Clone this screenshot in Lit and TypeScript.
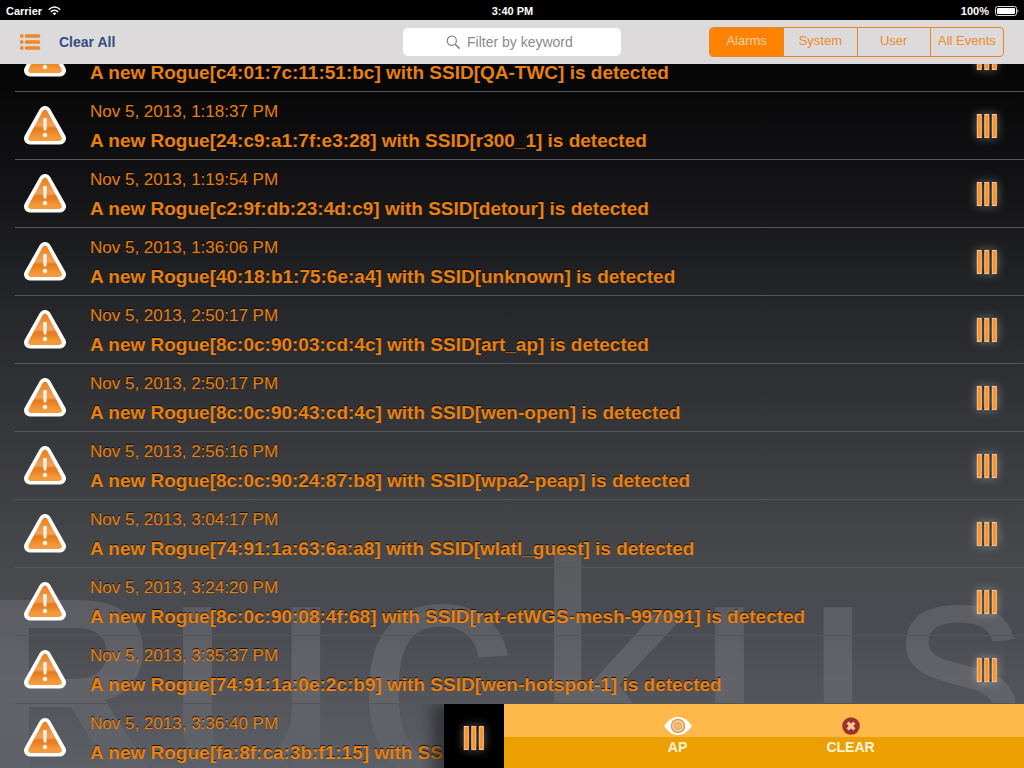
import { LitElement, html, svg, css } from "lit";
import { customElement, property, state, query } from "lit/decorators.js";
import { classMap } from "lit/directives/class-map.js";

interface Alarm {
  time: string;
  mac: string;
  ssid: string;
}

const ALARMS: Alarm[] = [
  { time: "1:17:20 PM", mac: "c4:01:7c:11:51:bc", ssid: "QA-TWC" },
  { time: "1:18:37 PM", mac: "24:c9:a1:7f:e3:28", ssid: "r300_1" },
  { time: "1:19:54 PM", mac: "c2:9f:db:23:4d:c9", ssid: "detour" },
  { time: "1:36:06 PM", mac: "40:18:b1:75:6e:a4", ssid: "unknown" },
  { time: "2:50:17 PM", mac: "8c:0c:90:03:cd:4c", ssid: "art_ap" },
  { time: "2:50:17 PM", mac: "8c:0c:90:43:cd:4c", ssid: "wen-open" },
  { time: "2:56:16 PM", mac: "8c:0c:90:24:87:b8", ssid: "wpa2-peap" },
  { time: "3:04:17 PM", mac: "74:91:1a:63:6a:a8", ssid: "wlatl_guest" },
  { time: "3:24:20 PM", mac: "8c:0c:90:08:4f:68", ssid: "rat-etWGS-mesh-997091" },
  { time: "3:35:37 PM", mac: "74:91:1a:0e:2c:b9", ssid: "wen-hotspot-1" },
  { time: "3:36:40 PM", mac: "fa:8f:ca:3b:f1:15", ssid: "HP-Print" },
];

const SEGMENTS = ["Alarms", "System", "User", "All Events"];

@customElement("grip-icon")
class GripIcon extends LitElement {
  static styles = css`
    :host { display: block; line-height: 0; }
    .grip { overflow: visible; filter: drop-shadow(0 0 5px rgba(255, 255, 255, 0.4)); }
  `;
  render() {
    return html`<svg class="grip" width="22" height="24" viewBox="0 0 22 24" aria-hidden="true">
      <rect x="1" y="0" width="20" height="24" fill="#000" fill-opacity="0.4" />
      ${[1, 8.5, 16].map(
        (x) => svg`<rect x=${x + 0.3} y="0.5" width="4" height="23" fill="#fb9228" stroke="#fbc991" stroke-width="1"/>`,
      )}
    </svg>`;
  }
}

@customElement("warning-icon")
class WarningIcon extends LitElement {
  static styles = css`
    :host { display: block; line-height: 0; }
  `;
  render() {
    return html`<svg width="44" height="42" viewBox="0 0 44 42" aria-hidden="true">
      <defs>
        <linearGradient id="face" x1="0" y1="0" x2="0" y2="1">
          <stop offset="0" stop-color="#ec8526" />
          <stop offset="0.5" stop-color="#f2a25a" />
          <stop offset="0.62" stop-color="#e47a1c" />
          <stop offset="1" stop-color="#f59a3c" />
        </linearGradient>
      </defs>
      <path d="M22 7 L37 33.500 H7 Z" fill="#fff" stroke="#fff" stroke-width="12" stroke-linejoin="round" />
      <path d="M22 7.500 L36 33.200 H8 Z" fill="url(#face)" stroke="url(#face)" stroke-width="5.500" stroke-linejoin="round" />
      <path d="M20.700 13.500 H23.300 L23 25 H21 Z" fill="#fff4e4" stroke="#fff4e4" stroke-linejoin="round" />
      <circle cx="22" cy="30" r="2.300" fill="#fff4e4" />
    </svg>`;
  }
}

@customElement("alarm-row")
class AlarmRow extends LitElement {
  @property({ attribute: false }) alarm!: Alarm;
  @property({ type: Boolean }) open = false;

  static styles = css`
    :host { display: block; position: relative; height: 68px; }
    .row {
      box-sizing: border-box;
      height: 100%;
      margin-left: 15px;
      padding: 0 26px 0 8px;
      display: flex;
      align-items: center;
      border-bottom: 1px solid #56575a;
    }
    .text {
      flex: 1;
      min-width: 0;
      margin-left: 23px;
      padding-top: 3px;
      color: #e8800f;
      text-shadow: 0 -1px 0 rgba(0, 0, 0, 0.75);
      white-space: nowrap;
    }
    .time { display: block; font-size: 17px; line-height: 24px; }
    .message { margin: 0; padding-top: 3px; font-size: 19px; line-height: 28px; font-weight: bold; }
    button {
      border: 0;
      padding: 0;
      margin: 0;
      background: none;
      font: inherit;
      color: inherit;
      cursor: pointer;
    }
    .drawer {
      position: absolute;
      top: 0;
      right: 0;
      bottom: 0;
      width: 580px;
      max-width: 100%;
      display: flex;
      box-shadow: -8px 4px 12px 4px rgba(20, 22, 28, 0.5);
      clip-path: inset(0 0 0 -24px);
    }
    .handle {
      width: 60px;
      background: #000;
      display: grid;
      place-items: center;
    }
    .actions {
      flex: 1;
      display: grid;
      grid-template-columns: 1fr 1fr;
      padding: 0 calc(100% * 3 / 20);
      background: linear-gradient(#ffb84a 0 33px, #eb9f00 33px);
    }
    .action {
      display: flex;
      flex-direction: column;
      align-items: center;
      gap: 3px;
      padding-top: 12px;
      color: #fff3da;
      font-size: 14px;
      line-height: 16px;
      font-weight: bold;
    }
  `;

  render() {
    return html`
      <div class="row">
        <warning-icon></warning-icon>
        <div class="text">
          <time class="time">Nov 5, 2013, ${this.alarm.time}</time>
          <p class="message">A new Rogue[${this.alarm.mac}] with SSID[${this.alarm.ssid}] is detected</p>
        </div>
        ${this.open ? "" : html`<button aria-label="Show actions"><grip-icon></grip-icon></button>`}
      </div>
      ${this.open
        ? html`<div class="drawer">
            <button class="handle" aria-label="Hide actions"><grip-icon></grip-icon></button>
            <div class="actions">
              <button class="action">
                <svg width="28" height="20" viewBox="0 0 28 20" aria-hidden="true">
                  <path d="M0 10 Q6 1 14 1 Q22 1 28 10 Q22 19 14 19 Q6 19 0 10Z" fill="#fff" />
                  <circle cx="14" cy="10" r="6.500" fill="#fbd9a8" stroke="#dc9a58" stroke-width="1.500" />
                  <circle cx="14" cy="10" r="3.800" fill="#f3b878" stroke="#e2a468" />
                </svg>
                AP
              </button>
              <button class="action">
                <svg width="20" height="20" viewBox="0 0 20 20" aria-hidden="true">
                  <circle cx="10" cy="10" r="8.800" fill="#9c322b" />
                  <path d="M6.700 6.700 L13.300 13.300 M13.300 6.700 L6.700 13.300" stroke="#fbc994" stroke-width="3.200" />
                </svg>
                CLEAR
              </button>
            </div>
          </div>`
        : ""}
    `;
  }
}

@customElement("app-root")
class AppRoot extends LitElement {
  @state() private segment = "Alarms";
  @query(".list") private list!: HTMLElement;

  static styles = css`
    :host {
      display: flex;
      flex-direction: column;
      height: 100vh;
      overflow: hidden;
      background: #000;
      font-family: "Liberation Sans", Arial, sans-serif;
    }
    .status {
      display: grid;
      grid-template-columns: 1fr auto 1fr;
      align-items: center;
      height: 20px;
      padding: 2px 5px 0 6px;
      box-sizing: border-box;
      color: #fff;
      font-size: 11px;
      font-weight: bold;
    }
    .carrier, .power { display: flex; align-items: center; gap: 6px; }
    .power { justify-content: flex-end; }
    .toolbar {
      display: grid;
      grid-template-columns: 1fr auto 1fr;
      align-items: center;
      height: 44px;
      padding: 0 20px;
      box-sizing: border-box;
      background: #dcdadb;
    }
    .left { display: flex; align-items: center; gap: 18px; }
    button {
      border: 0;
      margin: 0;
      padding: 0;
      background: none;
      font: inherit;
      cursor: pointer;
    }
    .menu { line-height: 0; }
    .clear { color: #344b80; font-size: 14px; font-weight: bold; }
    .search { position: relative; }
    .search svg { position: absolute; left: 43px; top: 7px; }
    .search input {
      display: block;
      box-sizing: border-box;
      width: 218px;
      height: 28px;
      padding: 0 8px 0 64px;
      border: 0;
      border-radius: 5px;
      background: #fff;
      color: #333;
      font: 14px "Liberation Sans", Arial, sans-serif;
    }
    .search input::placeholder { color: #8a8a8e; opacity: 1; }
    .segments {
      justify-self: end;
      display: grid;
      grid-template-columns: repeat(4, 1fr);
      box-sizing: border-box;
      width: 295px;
      height: 30px;
      border: 1px solid #ee8420;
      border-radius: 4px;
      overflow: hidden;
    }
    .segment {
      padding-bottom: 3px;
      color: #ee8a2c;
      font-size: 13px;
      white-space: nowrap;
    }
    .segment + .segment { border-left: 1px solid #ee8420; }
    .segment.active { background: #ff8200; color: #f5d3ae; }
    .content {
      position: relative;
      flex: 1;
      min-height: 0;
      background: linear-gradient(
        #050506 0%,
        #131315 17%,
        #242528 33%,
        #36373a 52%,
        #46484b 70%,
        #4b4c52 80%,
        #54565c 91%,
        #5c5f65 100%
      );
    }
    .watermark {
      position: absolute;
      left: 0;
      bottom: 0;
      width: 100%;
      overflow: hidden;
      font-family: "Liberation Sans", Arial, sans-serif;
      mask-image: linear-gradient(#000 60%, rgba(0, 0, 0, 0.2) 100%);
    }
    .list {
      position: relative;
      height: 100%;
      overflow-y: auto;
      scrollbar-width: none;
    }
  `;

  async firstUpdated() {
    await this.updateComplete;
    // The list opens scrolled towards its newest entries.
    this.list.scrollTop = 40;
  }

  render() {
    return html`
      <div class="status">
        <span class="carrier">
          Carrier
          <svg width="13" height="10" viewBox="0 0 13 10" fill="none" stroke="#fff" stroke-width="1.500" aria-hidden="true">
            <path d="M0.700 3.700 Q6.500 -1.700 12.300 3.700" />
            <path d="M2.800 5.900 Q6.500 2.500 10.200 5.900" />
            <path d="M4.600 7.200 Q6.500 5.600 8.400 7.200 L6.500 9.300Z" fill="#fff" stroke="none" />
          </svg>
        </span>
        <span>3:40 PM</span>
        <span class="power">
          100%
          <svg width="24" height="10" viewBox="0 0 24 10" aria-hidden="true">
            <rect x="0.500" y="0.500" width="21" height="9" rx="2" fill="none" stroke="#ddd" />
            <rect x="2" y="2" width="18" height="6" rx="1" fill="#fff" />
            <path d="M22.500 3.200 Q24.500 5 22.500 6.800Z" fill="#ddd" />
          </svg>
        </span>
      </div>

      <header class="toolbar">
        <div class="left">
          <button class="menu" aria-label="Menu">
            <svg width="21" height="17" viewBox="0 0 21 17" fill="#ee8826" aria-hidden="true">
              ${[0.2, 6.2, 12.2].map(
                (y) => svg`<rect x="0" y=${y} width="3.500" height="3.500" rx="1.200"/>
                  <rect x="4.800" y=${y} width="15.400" height="3.500" rx="1.500"/>`,
              )}
            </svg>
          </button>
          <button class="clear">Clear All</button>
        </div>
        <label class="search">
          <svg width="15" height="15" viewBox="0 0 15 15" fill="none" stroke="#85858a" stroke-width="1.200" aria-hidden="true">
            <circle cx="5.800" cy="5.800" r="4.600" />
            <path d="M9.200 9.200 L13.600 13.600" stroke-width="1.500" />
          </svg>
          <input type="search" placeholder="Filter by keyword" aria-label="Filter by keyword" />
        </label>
        <div class="segments">
          ${SEGMENTS.map(
            (name) => html`<button
              class=${classMap({ segment: true, active: name === this.segment })}
              @click=${() => (this.segment = name)}
            >${name}</button>`,
          )}
        </div>
      </header>

      <main class="content">
        <svg class="watermark" viewBox="0 0 1024 228" fill="#bfbfc5" fill-opacity="0.16" aria-hidden="true">
          <text x="-24" y="233" font-size="250" font-weight="bold">R</text>
          <text x="162 355" y="239" font-size="325">uc</text>
          <text x="533" y="239" font-size="312">k</text>
          <text x="694" y="239" font-size="325">u</text>
          <text x="893" y="207" font-size="265">s</text>
        </svg>
        <div class="list">
          ${ALARMS.map(
            (alarm, i) => html`<alarm-row .alarm=${alarm} ?open=${i === ALARMS.length - 1}></alarm-row>`,
          )}
        </div>
      </main>
    `;
  }
}
